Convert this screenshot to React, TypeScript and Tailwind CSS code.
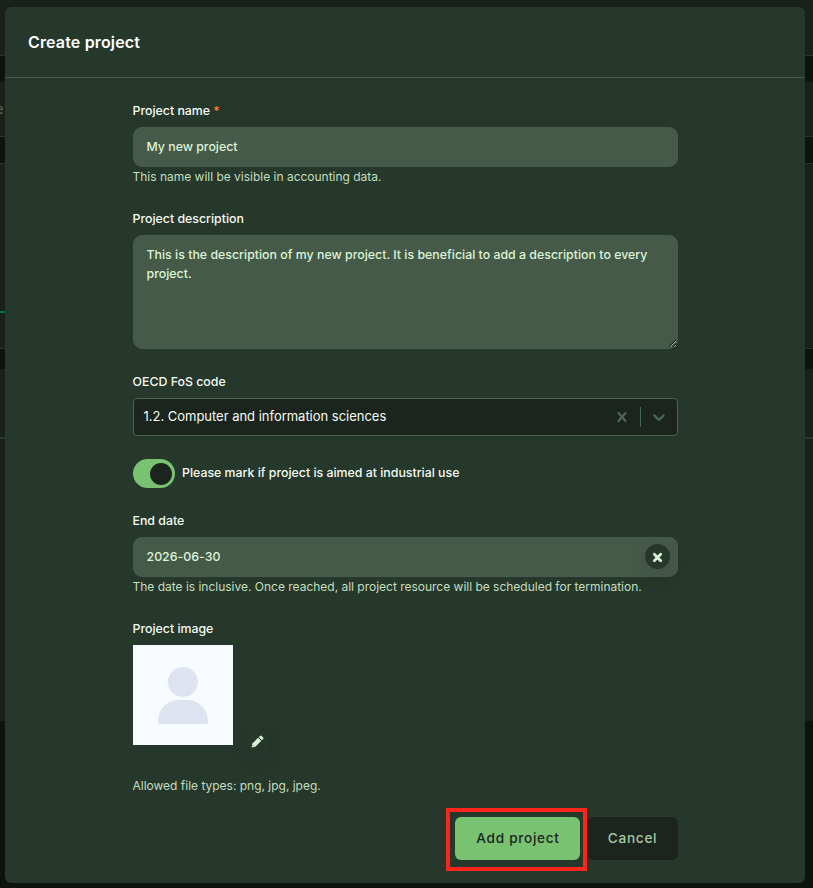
import type { ReactNode } from 'react';

function Backdrop() {
  return (
    <div className="flex h-full flex-col bg-[#18211a]" aria-hidden="true">
      <div className="h-[56px] border-b border-[#29352d]" />
      <div className="h-[26px] bg-[#0d130f]" />
      <div className="flex h-[55px] items-center border-b border-[#29352d] pt-[2px] text-[13px] text-[#5d6b5e]">
        <span className="-ml-[4px]">e</span>
      </div>
      <div className="h-[27px] border-b border-[#29352d] bg-[#0d130f]" />
      <div className="flex h-[185px] flex-col border-b border-[#29352d] pt-[147px]">
        <div className="h-[2px] w-[40px] bg-[#067647]" />
      </div>
      <div className="h-[20px] bg-[#0d130f]" />
      <div className="h-[70px] border-b-2 border-[#29352d]" />
      <div className="h-[282px]" />
      <div className="flex-1 bg-[#0d130f]" />
    </div>
  );
}

function Label({ children }: { children: ReactNode }) {
  return <div className="-ml-[0.5px] h-[19px] text-[12.35px] leading-[19px] font-medium text-[#f4fbf2]">{children}</div>;
}

function Hint({ children }: { children: ReactNode }) {
  return <div className="-ml-[0.5px] h-[18px] text-[12px] leading-[18px] tracking-[-0.01px] text-[#c3dfbe]">{children}</div>;
}

export default function App() {
  return (
    <div className="relative h-[888px] w-[813px] overflow-hidden font-['Inter',sans-serif]">
      <Backdrop />
      <div className="absolute top-[7px] left-[5px] flex h-[876px] w-[800px] flex-col rounded-[6px] bg-[#26372c]">
        <header className="flex h-[71px] items-center border-b border-[#465b4b] px-[23px]">
          <h1 className="text-[16px] leading-6 font-semibold tracking-[0.15px] text-white">Create project</h1>
        </header>
        <form className="ml-[128px] flex w-[545px] flex-col pt-[23px]">
          <Label>
            Project name <span className="text-[#ff7a36]">*</span>
          </Label>
          <div className="mt-[7px] flex h-[40px] items-center rounded-[9px] border border-[#465b4d] bg-[#465a4a] px-[12.5px] text-[12.35px] font-medium text-[#dcf5d6]">
            My new project
          </div>
          <div className="mt-[1px]">
            <Hint>This name will be visible in accounting data.</Hint>
          </div>
          <div className="mt-[23px]">
            <Label>Project description</Label>
          </div>
          <div className="relative mt-[7px] h-[114px] rounded-[9px] border border-[#465b4d] bg-[#465a4a] px-[12.5px] pt-[9px] text-[12.35px] leading-[19px] font-medium tracking-[0.01px] text-[#dcf5d6]">
            This is the description of my new project. It is beneficial to add a description to every
            <br />
            project.
            <svg className="absolute right-0 bottom-0" width="9" height="9" viewBox="0 0 9 9" fill="none">
              <path d="M1 8L8 1M5 8L8 5" stroke="#17211a" strokeWidth="1.4" />
              <path d="M2 8L8 2M6 8L8 6" stroke="#dbe6dc" strokeWidth=".7" />
            </svg>
          </div>
          <div className="mt-[23px]">
            <Label>OECD FoS code</Label>
          </div>
          <div className="mt-[7px] flex h-[38px] items-center rounded-[4px] border border-[#4c6552] bg-[#1b251e] pl-[9.5px] text-[13px] text-[#f4fbf2]">
            <span className="flex-1 tracking-[-0.02px]">1.2. Computer and information sciences</span>
            <svg className="mr-[8px]" width="20" height="20" viewBox="0 0 20 20" fill="#4c6552">
              <path d="M14.348 14.849c-0.469 0.469-1.229 0.469-1.697 0l-2.651-3.030-2.651 3.029c-0.469 0.469-1.229 0.469-1.697 0-0.469-0.469-0.469-1.229 0-1.697l2.758-3.15-2.759-3.152c-0.469-0.469-0.469-1.228 0-1.697s1.228-0.469 1.697 0l2.652 3.031 2.651-3.031c0.469-0.469 1.228-0.469 1.697 0s0.469 1.229 0 1.697l-2.758 3.152 2.758 3.15c0.469 0.469 0.469 1.229 0 1.698z" />
            </svg>
            <span className="h-[20px] w-px bg-[#4c6552]" />
            <svg className="mx-[8px]" width="20" height="20" viewBox="0 0 20 20" fill="#4c6552">
              <path d="M4.516 7.548c0.436-0.446 1.043-0.481 1.576 0l3.908 3.747 3.908-3.747c0.533-0.481 1.141-0.446 1.574 0 0.436 0.445 0.408 1.197 0 1.615-0.406 0.418-4.695 4.502-4.695 4.502-0.217 0.223-0.502 0.335-0.787 0.335s-0.57-0.112-0.789-0.335c0 0-4.287-4.084-4.695-4.502s-0.436-1.17 0-1.615z" />
            </svg>
          </div>
          <div className="mt-[23px] flex h-[29px] items-center">
            <span className="flex h-[29px] w-[42px] items-center justify-end rounded-full bg-[#78c272] pr-[3.5px]">
              <span className="size-[22px] rounded-full bg-[#1b251e]" />
            </span>
            <span className="mb-[2px] ml-[7px] text-[12.35px] leading-[19px] font-medium text-[#f4fbf2]">
              Please mark if project is aimed at industrial use
            </span>
          </div>
          <div className="mt-[23px]">
            <Label>End date</Label>
          </div>
          <div className="mt-[7px] flex h-[40px] items-center justify-between rounded-[9px] border border-[#465b4d] bg-[#465a4a] pr-[7px] pl-[12.5px] text-[12.35px] font-medium tracking-[0.02px] text-[#dcf5d6]">
            2026-06-30
            <span className="mb-px flex size-[25px] items-center justify-center rounded-full bg-[#26372c] shadow-[0_7px_20px_rgba(0,0,0,0.10)]">
              <svg className="mt-[1px]" width="11" height="11" viewBox="0 0 11 11">
                <path d="M2.3 2.3L8.7 8.7M8.7 2.3L2.3 8.7" stroke="#dcf5d6" strokeWidth="2.8" strokeLinecap="round" />
              </svg>
            </span>
          </div>
          <div className="mt-[1px]">
            <Hint>The date is inclusive. Once reached, all project resource will be scheduled for termination.</Hint>
          </div>
          <div className="mt-[23px]">
            <Label>Project image</Label>
          </div>
          <div className="mt-[7px] flex h-[100px]">
            <svg width="100" height="100" viewBox="0 0 100 100">
              <rect width="100" height="100" fill="#f8fbff" />
              <circle cx="50" cy="37" r="15" fill="#dde4f0" />
              <path d="M25 77C25 63 35 55 46 55h8c11 0 21 8 21 22q0 2-2 2H27q-2 0-2-2Z" fill="#dde4f0" />
            </svg>
            <span className="mt-[84px] ml-[12px] flex size-[25px] items-center justify-center rounded-full bg-[#26372c] shadow-[0_7px_18px_rgba(0,0,0,0.08)]">
              <svg className="mr-px" width="13" height="13" viewBox="0 0 13 13">
                <path d="M9 .9q.8-.8 1.6 0l1.5 1.5q.8.8 0 1.6l-1.2 1.2-3.1-3.1ZM7.1 2.8l3.1 3.1-5.9 5.9-3.7.8.7-4Z" fill="#dcf5d6" />
                <path d="M1.8 10.2l1 1" stroke="#26372c" strokeWidth=".8" />
              </svg>
            </span>
          </div>
          <div className="mt-[32px]">
            <Hint>Allowed file types: png, jpg, jpeg.</Hint>
          </div>
          <div className="mt-[13px] flex justify-end">
            <div className="z-10 h-[63px] w-[141px] border-4 border-[#ff241c] p-[5px]">
              <button type="button" className="h-[43px] w-[125px] rounded-[6px] bg-[#78c272] pl-px text-[13.65px] font-medium tracking-[0.7px] text-[#1b251e]">
                Add project
              </button>
            </div>
            <button type="button" className="mt-[9px] h-[43px] w-[91px] rounded-[6px] bg-[#1b251e] text-[13.65px] font-medium tracking-[0.7px] text-[#a5c9a1]">
              Cancel
            </button>
          </div>
        </form>
      </div>
    </div>
  );
}
